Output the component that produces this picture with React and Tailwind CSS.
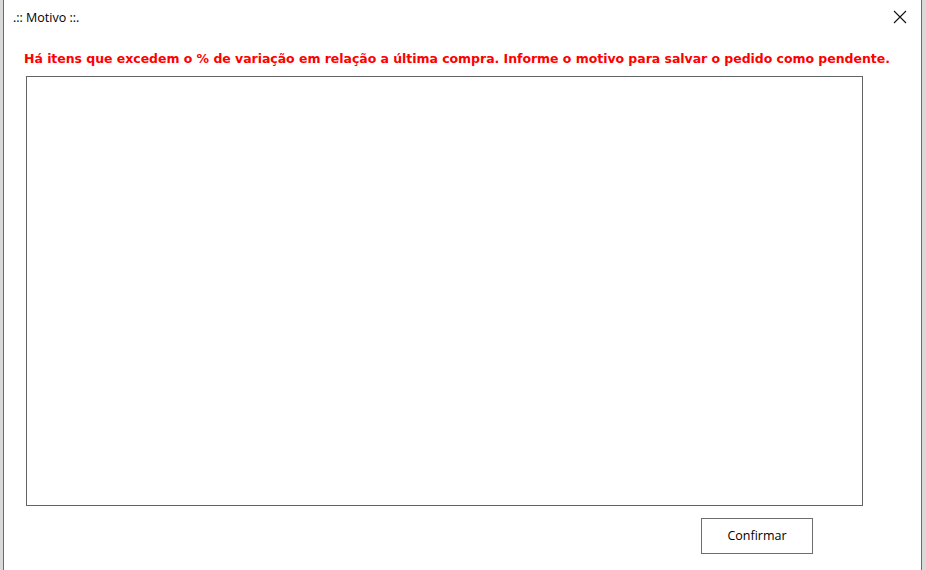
export default function App() {
  return (
    <div className="flex h-[570px] w-[926px] overflow-hidden bg-[#d9d9d9] pl-[3px] pr-[4px]">
      <div className="flex w-[919px] flex-col border-x border-[#1a7fd4] bg-white">
        {/* Title bar */}
        <div className="flex h-[35px] items-center justify-between pl-[9px] pr-[14px] font-['Open_Sans',sans-serif] text-[12.5px] text-black">
          <span className="mt-[2px] leading-none">.:: Motivo ::.</span>
          <svg width="14" height="14" viewBox="0 0 14 14" className="mt-[-1px]">
            <path d="M1 1 L13 13 M13 1 L1 13" stroke="#111" strokeWidth="1.1" fill="none" />
          </svg>
        </div>

        {/* Warning */}
        <p className="mt-[16px] pl-[20px] font-['DejaVu_Sans',sans-serif] text-[12.5px] font-bold leading-[16px] tracking-[-0.04px] text-[#ff0000]">
          Há itens que excedem o % de variação em relação a última compra. Informe o motivo para salvar o pedido como pendente.
        </p>

        {/* Reason field */}
        <textarea className="ml-[22px] mt-[9px] h-[430px] w-[837px] resize-none border border-[#646464] bg-white p-1 font-['Open_Sans',sans-serif] text-[12px] outline-none" />

        {/* Actions */}
        <div className="flex pl-[697px] pt-[12px]">
          <button className="h-[36px] w-[112px] border border-[#6e6e6e] bg-white font-['Open_Sans',sans-serif] text-[12.5px] text-black">
            Confirmar
          </button>
        </div>
      </div>
    </div>
  )
}
